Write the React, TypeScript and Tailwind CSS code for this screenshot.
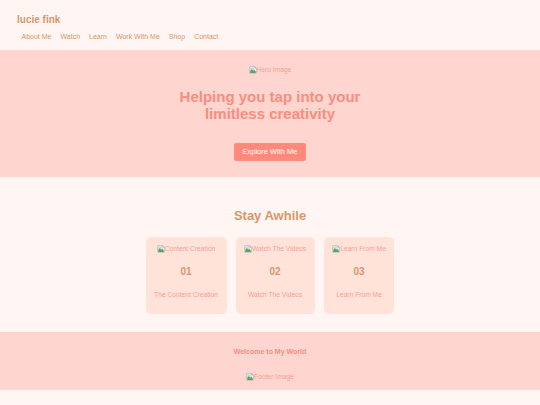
import React from "react";

const font = { fontFamily: '"Liberation Sans", Arial, sans-serif' };

function BrokenImage({ alt }: { alt: string }) {
  return (
    <span className="inline-flex items-center text-[6.7px] leading-[8px] text-[#f3a194]">
      <svg width="8" height="8" viewBox="0 0 16 16" className="shrink-0">
        <path d="M1.5 1.5h10l3 3v10h-13z" fill="#fff" stroke="#9aa0a6" strokeWidth="1.2" />
        <path d="M2.5 3h8v6h-8z" fill="#bcd7ef" />
        <path d="M2.5 14V9.5l3-3 3 3 2-2 3 3V14z" fill="#5aa74c" />
        <path d="M11.5 1.5v3h3" fill="none" stroke="#9aa0a6" strokeWidth="1.2" />
      </svg>
      <span>{alt}</span>
    </span>
  );
}

const links = ["About Me", "Watch", "Learn", "Work With Me", "Shop", "Contact"];

const cards = [
  { alt: "Content Creation", num: "01", label: "The Content Creation" },
  { alt: "Watch The Videos", num: "02", label: "Watch The Videos" },
  { alt: "Learn From Me", num: "03", label: "Learn From Me" },
];

export default function App() {
  return (
    <div className="min-h-screen bg-[#fff5f2]" style={font}>
      {/* Header */}
      <header className="px-[17px] pt-[14px] pb-[9px]">
        <div className="text-[10px] leading-[12px] font-bold text-[#d9966c]">lucie fink</div>
        <nav className="mt-[7px] flex">
          {links.map((l) => (
            <a key={l} className="px-[4.5px] text-[7px] leading-[8px] text-[#d9966c]">
              {l}
            </a>
          ))}
        </nav>
      </header>

      {/* Hero */}
      <section className="bg-[#ffd6cf] pt-[16px] pb-[16px] flex flex-col items-center text-center">
        <BrokenImage alt="Hero Image" />
        <h1 className="mt-[13.5px] text-[15px] leading-[17px] font-bold text-[#f98d7e]">
          Helping you tap into your
          <br />
          limitless creativity
        </h1>
        <button className="mt-[21.5px] h-[18px] px-[8px] flex items-center rounded-[2px] bg-[#ff8a7c] text-white text-[7.5px] font-normal">
          Explore With Me
        </button>
      </section>

      {/* Stay Awhile */}
      <section className="pt-[30.5px] pb-[18px] flex flex-col items-center">
        <h2 className="text-[13px] leading-[15px] font-bold text-[#d9966c]">Stay Awhile</h2>
        <div className="mt-[14.5px] flex gap-[9px]">
          {cards.map((c) => (
            <div
              key={c.num}
              className="bg-[#ffe3d9] rounded-[5px] px-[8.5px] pt-[8px] pb-[15px] flex flex-col items-center text-center"
            >
              <BrokenImage alt={c.alt} />
              <div className="mt-[13px] text-[10px] leading-[12px] font-bold text-[#d9966c]">{c.num}</div>
              <div className="mt-[13px] text-[6.7px] leading-[8px] text-[#f4a093] whitespace-nowrap">
                {c.label}
              </div>
            </div>
          ))}
        </div>
      </section>

      {/* Footer */}
      <footer className="bg-[#ffd6cf] pt-[16px] pb-[9px] flex flex-col items-center">
        <div className="text-[7px] leading-[8px] font-bold text-[#f58d7f]">Welcome to My World</div>
        <div className="mt-[17px] flex">
          <BrokenImage alt="Footer Image" />
        </div>
      </footer>
    </div>
  );
}
